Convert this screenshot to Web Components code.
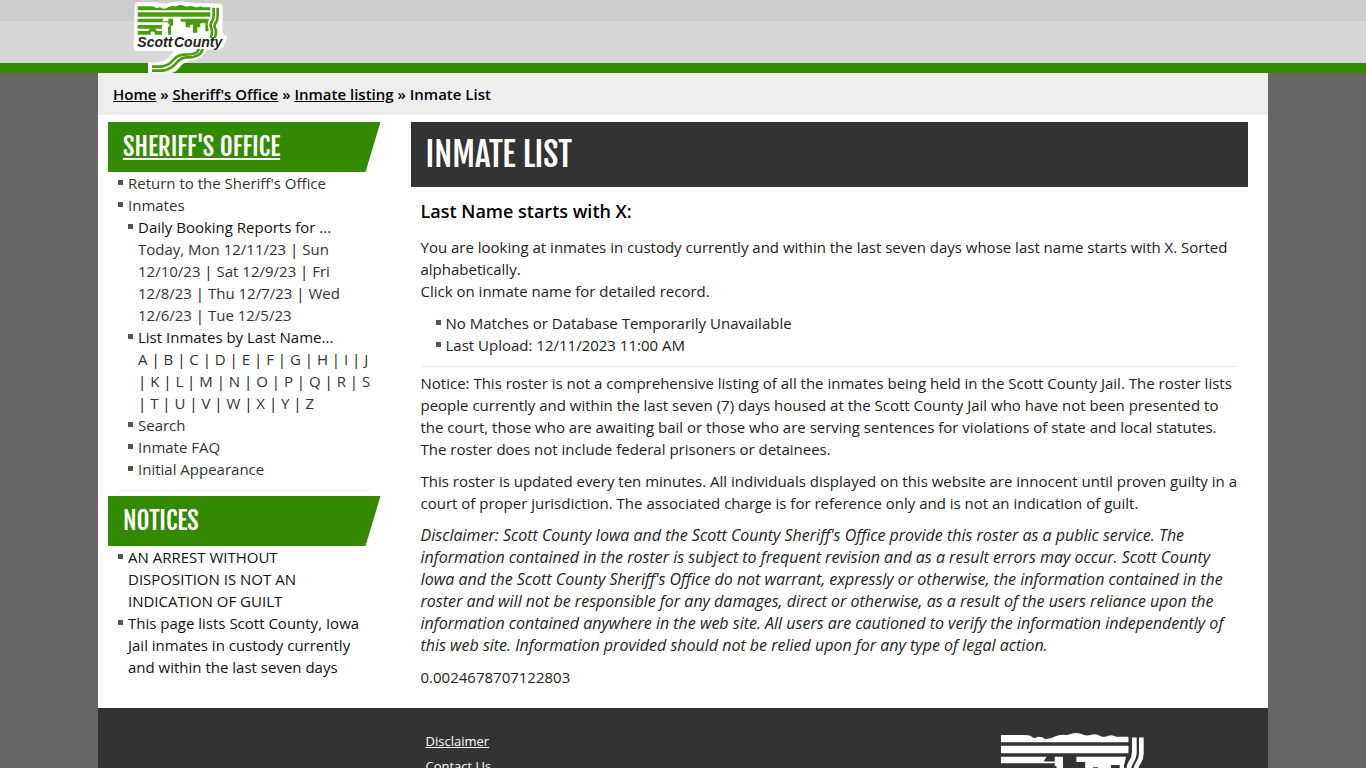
<!DOCTYPE html>
<html lang="en">
<head>
<meta charset="utf-8">
<title>Inmate List</title>
<style>
    body {
        margin: 0;
        background: #666;
        color: #222;
        font: 15px/22px "Open Sans", sans-serif;
    }
</style>
</head>
<body>
<site-header></site-header>
<page-shell>
    <bread-crumbs slot="trail" current="Inmate List"></bread-crumbs>
    <side-nav slot="side"></side-nav>
    <inmate-list slot="main"></inmate-list>
    <site-footer slot="footer"></site-footer>
</page-shell>
<script>
const DISPLAY_FONT = '"Fjalla One", "Roboto Condensed", "Liberation Sans Narrow", sans-serif';

const LIST_STYLES = `
    ul {
        list-style: none;
        margin: 0;
        padding: 0;
    }

    li {
        padding-left: 10px;
        background: linear-gradient(#555, #555) 0 8px / 5px 5px no-repeat;
    }

    hr {
        border: 0;
        border-top: 1px solid #eee;
        margin: 10px 0 5px;
    }
`;

class CountyLogo extends HTMLElement {
    constructor() {
        super();
        this.attachShadow({ mode: 'open' });
        this.shadowRoot.innerHTML = `
            <style>
                :host {
                    display: block;
                }

                svg {
                    display: block;
                    width: 100%;
                }

                .halo {
                    fill: var(--logo-halo, #fff);
                }

                .ink {
                    fill: var(--logo-ink, #4b9c0f);
                }

                .ribbon {
                    fill: none;
                    stroke: var(--logo-ink, #4b9c0f);
                    stroke-width: 8;
                }

                text {
                    fill: var(--logo-text, #222);
                    font: italic bold 42px "Liberation Sans", sans-serif;
                }
            </style>
            <svg viewBox="126 0 294 222" role="img" aria-label="Scott County">
                <path class="halo" d="M142 7H200L225 11Q272 0 300 8L392 11Q399 14 398 24L397 92Q398 103 410 108Q412 114 409 120L399 142Q394 149 382 149H352Q340 172 312 180Q285 183 270 200Q258 219 238 219H174V188Q228 188 240 168L252 153H142Q131 152 131 140L134 16Q134 8 142 7Z"/>
                <path class="ink" d="M143 19H184Q193 19 197 23Q202 25 207 22Q214 22 219 26Q228 26 236 21Q244 17 256 19L267 16Q276 14 283 18Q289 21 296 19Q304 16 312 20Q319 24 326 20Q334 18 340 22H361V31H143ZM143 37H361V50H143ZM143 56H221L216 64H249V67H143ZM143 75H216V86H143ZM143 93H174V104H143ZM198 93H216V104H198Z"/>
                <path class="ink" d="M235 56H249V77H243V104H234V80H238V72H235ZM272 56H357L353 72L356 94H346V70H331V82H322V98H309V74H300V82H287V65H272Z"/>
                <path class="ink" d="M174 104V92L188 80L201 92V104H194V95H182V104Z"/>
                <path class="ribbon" d="M371 23V44Q372 56 365 66Q359 75 364 84Q369 95 362 114"/>
                <path class="ribbon" d="M383 23V46Q384 58 377 68Q371 77 376 86Q381 97 374 114"/>
                <path class="ribbon" d="M186 200H212Q235 198 250 180Q262 165 282 164Q325 164 326 147"/>
                <path class="ribbon" d="M186 212H218Q243 208 258 190Q270 174 288 172Q332 174 338 147"/>
                <text x="142" y="140">Scott</text>
                <text x="252" y="140">County</text>
            </svg>
        `;
    }
}

customElements.define('county-logo', CountyLogo);

class SiteHeader extends HTMLElement {
    constructor() {
        super();
        this.attachShadow({ mode: 'open' });
        this.shadowRoot.innerHTML = `
            <style>
                :host {
                    display: block;
                    background: linear-gradient(#ccc 21px, #d7d7d7 21px);
                    border-bottom: 10px solid #338900;
                }

                header {
                    position: relative;
                    max-width: 1170px;
                    height: 63px;
                    margin: 0 auto;
                }

                a {
                    position: absolute;
                    top: 0;
                    left: 34px;
                    width: 98px;
                    z-index: 1;
                }
            </style>
            <header>
                <a href="#"><county-logo></county-logo></a>
            </header>
        `;
    }
}

customElements.define('site-header', SiteHeader);

class PageShell extends HTMLElement {
    constructor() {
        super();
        this.attachShadow({ mode: 'open' });
        this.shadowRoot.innerHTML = `
            <style>
                :host {
                    display: block;
                    max-width: 1170px;
                    margin: 0 auto;
                    background: #fff;
                }

                .columns {
                    display: grid;
                    grid-template-columns: 1fr 3fr;
                    padding: 7px 0 20px;
                }

                aside {
                    padding: 0 10px;
                }

                main {
                    padding: 0 20px;
                }
            </style>
            <slot name="trail"></slot>
            <div class="columns">
                <aside><slot name="side"></slot></aside>
                <main><slot name="main"></slot></main>
            </div>
            <slot name="footer"></slot>
        `;
    }
}

customElements.define('page-shell', PageShell);

class BreadCrumbs extends HTMLElement {
    constructor() {
        super();
        this.attachShadow({ mode: 'open' });
        this.shadowRoot.innerHTML = `
            <style>
                :host {
                    display: block;
                    padding: 10px 15px;
                    background: #eee;
                    color: #000;
                    font-weight: 600;
                }

                a {
                    color: inherit;
                }
            </style>
            <nav>
                <a href="#">Home</a> » <a href="#">Sheriff's Office</a> » <a href="#">Inmate listing</a> » <span></span>
            </nav>
        `;
    }

    connectedCallback() {
        this.shadowRoot.querySelector('span').textContent = this.getAttribute('current');
    }
}

customElements.define('bread-crumbs', BreadCrumbs);

class SideHeading extends HTMLElement {
    constructor() {
        super();
        this.attachShadow({ mode: 'open' });
        this.shadowRoot.innerHTML = `
            <style>
                :host {
                    display: block;
                }

                h2 {
                    margin: 0;
                    padding: 0 15px;
                    background: #338900;
                    clip-path: polygon(0 0, 100% 0, calc(100% - 15px) 100%, 0 100%);
                    color: #fff;
                    font: 25px/50px ${DISPLAY_FONT};
                    text-transform: uppercase;
                }
            </style>
            <h2><slot></slot></h2>
        `;
    }
}

customElements.define('side-heading', SideHeading);

class SideNav extends HTMLElement {
    constructor() {
        super();
        const days = ['Today, Mon 12/11/23', 'Sun 12/10/23', 'Sat 12/9/23', 'Fri 12/8/23', 'Thu 12/7/23', 'Wed 12/6/23', 'Tue 12/5/23'];
        const letters = [...'ABCDEFGHIJKLMNOPQRSTUVWXYZ'];

        this.attachShadow({ mode: 'open' });
        this.shadowRoot.innerHTML = `
            <style>
                ${LIST_STYLES}

                :host {
                    display: block;
                }

                section {
                    padding: 0 10px;
                }

                li {
                    color: #111;
                }

                li a {
                    color: #333;
                    text-decoration: none;
                }

                side-heading a {
                    color: inherit;
                }
            </style>
            <side-heading><a href="#">Sheriff's Office</a></side-heading>
            <section>
                <ul>
                    <li><a href="#">Return to the Sheriff's Office</a></li>
                    <li><a href="#">Inmates</a>
                        <ul>
                            <li>Daily Booking Reports for ...<br>${this._links(days)}</li>
                            <li>List Inmates by Last Name...<br>${this._links(letters)}</li>
                            <li><a href="#">Search</a></li>
                            <li><a href="#">Inmate FAQ</a></li>
                            <li><a href="#">Initial Appearance</a></li>
                        </ul>
                    </li>
                </ul>
                <hr>
            </section>
            <side-heading>Notices</side-heading>
            <section>
                <ul>
                    <li>AN ARREST WITHOUT DISPOSITION IS NOT AN INDICATION OF GUILT</li>
                    <li>This page lists Scott County, Iowa Jail inmates in custody currently and within the last seven days</li>
                </ul>
            </section>
        `;
    }

    _links(labels) {
        return labels.map(label => `<a href="#">${label}</a>`).join(' | ');
    }
}

customElements.define('side-nav', SideNav);

class InmateList extends HTMLElement {
    constructor() {
        super();
        this.attachShadow({ mode: 'open' });
        this.shadowRoot.innerHTML = `
            <style>
                ${LIST_STYLES}

                :host {
                    display: block;
                }

                h1 {
                    margin: 0;
                    padding: 0 15px;
                    background: #333;
                    color: #fff;
                    font: 33px/65px ${DISPLAY_FONT};
                    text-transform: uppercase;
                }

                section {
                    padding: 0 10px;
                }

                h3 {
                    margin: 14px 0;
                    color: #000;
                    font-size: 18px;
                    line-height: 21px;
                    font-weight: 600;
                }

                p {
                    margin: 0 0 10px;
                }

                .disclaimer {
                    font-size: 16px;
                    font-style: italic;
                }

                ul {
                    padding-left: 15px;
                }
            </style>
            <h1>Inmate List</h1>
            <section>
                <h3>Last Name starts with X:</h3>
                <p>You are looking at inmates in custody currently and within the last seven days whose last name starts with X. Sorted alphabetically.<br>Click on inmate name for detailed record.</p>
                <ul>
                    <li>No Matches or Database Temporarily Unavailable</li>
                    <li>Last Upload: 12/11/2023 11:00 AM</li>
                </ul>
                <hr>
                <p>Notice: This roster is not a comprehensive listing of all the inmates being held in the Scott County Jail. The roster lists people currently and within the last seven (7) days housed at the Scott County Jail who have not been presented to the court, those who are awaiting bail or those who are serving sentences for violations of state and local statutes. The roster does not include federal prisoners or detainees.</p>
                <p>This roster is updated every ten minutes. All individuals displayed on this website are innocent until proven guilty in a court of proper jurisdiction. The associated charge is for reference only and is not an indication of guilt.</p>
                <p class="disclaimer">Disclaimer: Scott County Iowa and the Scott County Sheriff's Office provide this roster as a public service. The information contained in the roster is subject to frequent revision and as a result errors may occur. Scott County Iowa and the Scott County Sheriff's Office do not warrant, expressly or otherwise, the information contained in the roster and will not be responsible for any damages, direct or otherwise, as a result of the users reliance upon the information contained anywhere in the web site. All users are cautioned to verify the information independently of this web site. Information provided should not be relied upon for any type of legal action.</p>
                <div>0.0024678707122803</div>
            </section>
        `;
    }
}

customElements.define('inmate-list', InmateList);

class SiteFooter extends HTMLElement {
    constructor() {
        super();
        this.attachShadow({ mode: 'open' });
        this.shadowRoot.innerHTML = `
            <style>
                :host {
                    display: block;
                    background: #333;
                    color: #fff;
                }

                footer {
                    display: grid;
                    grid-template-columns: 1fr 2fr 1fr;
                    padding: 16px 0;
                }

                ul {
                    grid-column: 2;
                    list-style: none;
                    margin: 0;
                    padding: 5px 35px;
                    font-size: 13px;
                    line-height: 25px;
                }

                a {
                    color: inherit;
                }

                county-logo {
                    width: 172px;
                    margin-left: 15px;
                    --logo-halo: none;
                    --logo-ink: #fff;
                    --logo-text: #fff;
                }
            </style>
            <footer>
                <ul>
                    <li><a href="#">Disclaimer</a></li>
                    <li><a href="#">Contact Us</a></li>
                </ul>
                <county-logo></county-logo>
            </footer>
        `;
    }
}

customElements.define('site-footer', SiteFooter);
</script>
</body>
</html>
